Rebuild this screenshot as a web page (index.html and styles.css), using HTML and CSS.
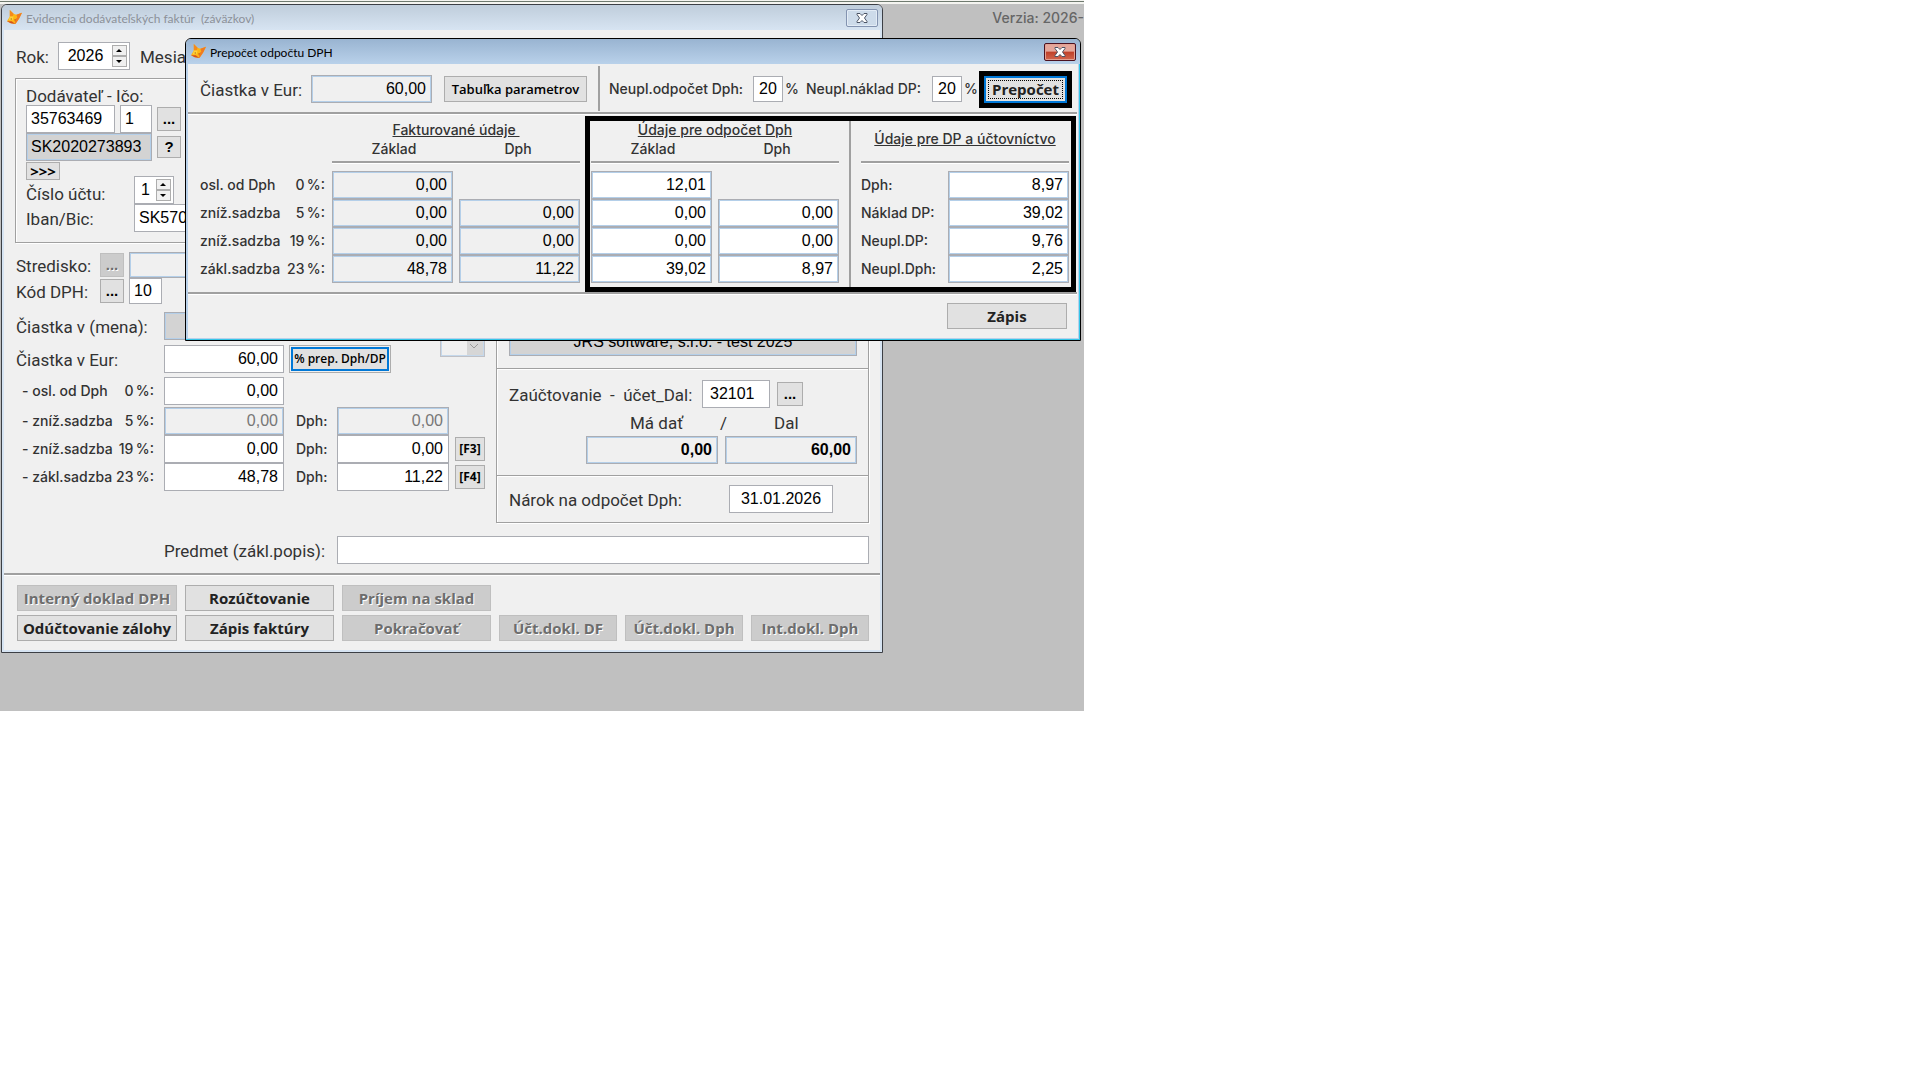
FILE: index.html
```html
<!DOCTYPE html>
<html lang="sk">
<head>
  <meta charset="UTF-8">
  <meta name="viewport" content="width=device-width, initial-scale=1.0">
  <title>Evidencia dodávateľských faktúr</title>
  <link rel="stylesheet" href="styles.css">
</head>
<body>
  <svg width="0" height="0" class="defs">
    <symbol id="fox" viewBox="0 0 16 16">
      <path d="M3 0 L7 4 L10 5 L16 3 L13 9 L9 15 L4 14 L0 12 L3 7 Z" fill="#fdb515"/>
      <path d="M3 0 L7 4 L6 7 L3 7 Z" fill="#f58a1c"/>
      <path d="M10 5 L16 3 L13 9 L9 15 L8 11 L11 8 Z" fill="#f07a22"/>
      <path d="M3 7 L7 7 L6 11 L2 11 Z" fill="#ffd23a"/>
      <path d="M0 12 L5 12 L9 15 L4 14 Z" fill="#d4501c"/>
      <path d="M4 9h1v1h-1z M8 10h1v1h-1z" fill="#7a3b10"/>
    </symbol>
    <symbol id="cross" viewBox="0 0 12 10">
      <path d="M1 .5h3l2 2 2-2h3v1L8.500 5l2.500 3.500v1H8l-2-2-2 2H1v-1L3.500 5 1 1.500z" fill="#fff" stroke="#4c5566" stroke-width="1"/>
    </symbol>
  </svg>

  <main class="desktop">
    <p class="version">Verzia: 2026-</p>

    <form class="window main-window">
      <header class="titlebar">
        <svg class="fox"><use href="#fox"/></svg>
        <h1>Evidencia dodávateľských faktúr&nbsp; (záväzkov)</h1>
        <button type="button" class="close" aria-label="Zavrieť"><svg><use href="#cross"/></svg></button>
      </header>

      <div class="columns">
        <div class="left">
          <div class="row">
            <label class="lbl w-year" for="rok">Rok:</label>
            <span class="spinner year">
              <input id="rok" type="text" value="2026">
              <span class="arrows"><button type="button" aria-label="Viac"></button><button type="button" class="down" aria-label="Menej"></button></span>
            </span>
            <span class="lbl month">Mesiac:</span>
          </div>

          <div class="supplier">
            <label class="lbl head" for="ico">Dodávateľ - Ičo:</label>
            <div class="row gap">
              <input class="field ico" id="ico" type="text" value="35763469">
              <input class="field short" type="text" value="1" aria-label="Poradie">
              <button type="button" class="btn dots">...</button>
            </div>
            <div class="row gap">
              <input class="field locked dark dic" type="text" value="SK2020273893" readonly aria-label="IČ DPH">
              <button type="button" class="btn quest">?</button>
            </div>
            <button type="button" class="btn more">&gt;&gt;&gt;</button>
            <div class="row account">
              <label class="lbl w-acc" for="ucet">Číslo účtu:</label>
              <span class="spinner">
                <input id="ucet" type="text" value="1">
                <span class="arrows"><button type="button" aria-label="Viac"></button><button type="button" class="down" aria-label="Menej"></button></span>
              </span>
            </div>
            <div class="row">
              <label class="lbl w-acc" for="iban">Iban/Bic:</label>
              <input class="field iban" id="iban" type="text" value="SK5702000000">
            </div>
          </div>

          <div class="row centre">
            <label class="lbl w-code" for="stredisko">Stredisko:</label>
            <button type="button" class="btn dots" disabled>...</button>
            <input class="field locked centre-in" id="stredisko" type="text" readonly>
          </div>
          <div class="row code">
            <label class="lbl w-code" for="kod">Kód DPH:</label>
            <button type="button" class="btn dots">...</button>
            <input class="field code-in" id="kod" type="text" value="10">
          </div>
          <div class="row currency">
            <label class="lbl w-sum" for="mena">Čiastka v (mena):</label>
            <input class="field locked dark sum" id="mena" type="text" readonly>
          </div>
          <div class="row eur">
            <label class="lbl w-sum" for="eur">Čiastka v Eur:</label>
            <input class="field sum" id="eur" type="text" value="60,00">
            <button type="button" class="btn recalc">% prep. Dph/DP</button>
            <span class="combo">
              <select disabled aria-label="Mena"><option></option></select>
              <svg viewBox="0 0 10 6"><path d="M1 1l4 4 4-4" fill="none" stroke="#9a9a9a"/></svg>
            </span>
          </div>

          <div class="row rate first">
            <label class="small" for="z0"><span>- osl. od Dph</span><span>0&thinsp;%:</span></label>
            <input class="field sum" id="z0" type="text" value="0,00">
          </div>
          <div class="row rate">
            <label class="small" for="z5"><span>- zníž.sadzba</span><span>5&thinsp;%:</span></label>
            <input class="field locked faded sum" id="z5" type="text" value="0,00" readonly>
            <label class="small tax" for="d5">Dph:</label>
            <input class="field locked faded sum vat" id="d5" type="text" value="0,00" readonly>
          </div>
          <div class="row rate">
            <label class="small" for="z19"><span>- zníž.sadzba</span><span>19&thinsp;%:</span></label>
            <input class="field sum" id="z19" type="text" value="0,00">
            <label class="small tax" for="d19">Dph:</label>
            <input class="field sum vat" id="d19" type="text" value="0,00">
            <button type="button" class="btn fkey">[F3]</button>
          </div>
          <div class="row rate">
            <label class="small" for="z23"><span>- zákl.sadzba</span><span>23&thinsp;%:</span></label>
            <input class="field sum" id="z23" type="text" value="48,78">
            <label class="small tax" for="d23">Dph:</label>
            <input class="field sum vat" id="d23" type="text" value="11,22">
            <button type="button" class="btn fkey">[F4]</button>
          </div>
        </div>

        <div class="panel">
          <div class="company">
            <input class="field locked dark" type="text" value="JRS software, s.r.o. - test 2025" readonly aria-label="Firma">
          </div>
          <div class="posting">
            <div class="row">
              <label class="lbl w-post" for="dal">Zaúčtovanie&nbsp; -&nbsp; účet_Dal:</label>
              <input class="field acct" id="dal" type="text" value="32101">
              <button type="button" class="btn dots wide">...</button>
            </div>
            <div class="balance">
              <label class="lbl" for="mada">Má dať</label>
              <span class="lbl">/</span>
              <label class="lbl" for="dalsum">Dal</label>
            </div>
            <div class="row totals">
              <input class="field locked sum" id="mada" type="text" value="0,00" readonly>
              <input class="field locked sum" id="dalsum" type="text" value="60,00" readonly>
            </div>
          </div>
          <div class="claim row">
            <label class="lbl" for="narok">Nárok na odpočet Dph:</label>
            <input class="field date" id="narok" type="text" value="31.01.2026">
          </div>
        </div>
      </div>

      <div class="row subject">
        <label class="lbl" for="predmet">Predmet (zákl.popis):</label>
        <input class="field" id="predmet" type="text">
      </div>

      <footer class="actions">
        <button type="button" class="btn" disabled>Interný doklad DPH</button>
        <button type="button" class="btn">Rozúčtovanie</button>
        <button type="button" class="btn" disabled>Príjem na sklad</button>
        <button type="button" class="btn new-line">Odúčtovanie zálohy</button>
        <button type="button" class="btn">Zápis faktúry</button>
        <button type="button" class="btn" disabled>Pokračovať</button>
        <button type="button" class="btn" disabled>Účt.dokl. DF</button>
        <button type="button" class="btn" disabled>Účt.dokl. Dph</button>
        <button type="button" class="btn" disabled>Int.dokl. Dph</button>
      </footer>
    </form>

    <form class="window dialog">
      <header class="titlebar">
        <svg class="fox"><use href="#fox"/></svg>
        <h2>Prepočet odpočtu DPH</h2>
        <button type="button" class="close" aria-label="Zavrieť"><svg><use href="#cross"/></svg></button>
      </header>

      <div class="params">
        <label class="lbl w-eur" for="p-eur">Čiastka v Eur:</label>
        <input class="field locked sum" id="p-eur" type="text" value="60,00" readonly>
        <button type="button" class="btn table-btn">Tabuľka parametrov</button>
        <div class="percents">
          <label class="small" for="p-odp">Neupl.odpočet Dph:</label>
          <input class="field pct" id="p-odp" type="text" value="20">
          <span class="small unit">%</span>
          <label class="small" for="p-nak">Neupl.náklad DP:</label>
          <input class="field pct" id="p-nak" type="text" value="20">
          <span class="small unit">%</span>
        </div>
        <div class="mark"><button type="button" class="btn default">Prepočet</button></div>
      </div>

      <div class="tables">
        <div class="rates">
          <label class="small" for="f0"><span>osl. od Dph</span><span>0&thinsp;%:</span></label>
          <label class="small" for="f5"><span>zníž.sadzba</span><span>5&thinsp;%:</span></label>
          <label class="small" for="f19"><span>zníž.sadzba</span><span>19&thinsp;%:</span></label>
          <label class="small" for="f23"><span>zákl.sadzba</span><span>23&thinsp;%:</span></label>
        </div>

        <div class="group">
          <div class="group-head">
            <h3>Fakturované údaje&nbsp;</h3>
            <div class="pair small"><span>Základ</span><span>Dph</span></div>
          </div>
          <div class="cells">
            <input class="field locked sum" id="f0" type="text" value="0,00" readonly>
            <span></span>
            <input class="field locked sum" id="f5" type="text" value="0,00" readonly>
            <input class="field locked sum" type="text" value="0,00" readonly aria-label="Dph 5 %">
            <input class="field locked sum" id="f19" type="text" value="0,00" readonly>
            <input class="field locked sum" type="text" value="0,00" readonly aria-label="Dph 19 %">
            <input class="field locked sum" id="f23" type="text" value="48,78" readonly>
            <input class="field locked sum" type="text" value="11,22" readonly aria-label="Dph 23 %">
          </div>
        </div>

        <div class="mark marked">
          <div class="group">
            <div class="group-head">
              <h3>Údaje pre odpočet Dph</h3>
              <div class="pair small"><span>Základ</span><span>Dph</span></div>
            </div>
            <div class="cells">
              <input class="field result sum" type="text" value="12,01" aria-label="Základ 0 %">
              <span></span>
              <input class="field result sum" type="text" value="0,00" aria-label="Základ 5 %">
              <input class="field result sum" type="text" value="0,00" aria-label="Odpočet 5 %">
              <input class="field result sum" type="text" value="0,00" aria-label="Základ 19 %">
              <input class="field result sum" type="text" value="0,00" aria-label="Odpočet 19 %">
              <input class="field result sum" type="text" value="39,02" aria-label="Základ 23 %">
              <input class="field result sum" type="text" value="8,97" aria-label="Odpočet 23 %">
            </div>
          </div>
          <div class="group ledger">
            <div class="group-head">
              <h3>Údaje pre DP a účtovníctvo</h3>
            </div>
            <div class="cells">
              <label class="small" for="u-dph">Dph:</label>
              <input class="field result sum" id="u-dph" type="text" value="8,97">
              <label class="small" for="u-nak">Náklad DP:</label>
              <input class="field result sum" id="u-nak" type="text" value="39,02">
              <label class="small" for="u-ndp">Neupl.DP:</label>
              <input class="field result sum" id="u-ndp" type="text" value="9,76">
              <label class="small" for="u-ndph">Neupl.Dph:</label>
              <input class="field result sum" id="u-ndph" type="text" value="2,25">
            </div>
          </div>
        </div>
      </div>

      <footer class="save"><button type="button" class="btn">Zápis</button></footer>
    </form>
  </main>
</body>
</html>
```
FILE: styles.css
```css
* {
  margin: 0;
  padding: 0;
  box-sizing: border-box;
}

body {
  font-family: Roboto, "Liberation Sans", sans-serif;
  font-size: 16px;
  color: #333;
  background: #fff;
}

.defs {
  position: absolute;
}

.desktop {
  position: relative;
  max-width: 1084px;
  padding: 2px 0 58px 1px;
  background: #c0c0c0;
  border-top: 1px solid #f4f4f0;
  box-shadow: inset 0 1px #6f7a6f, inset 0 3px #f4f4f0;
  overflow: hidden;
}

.version {
  position: absolute;
  top: 7px;
  right: 0;
  white-space: nowrap;
  font: 500 14px/20px Inter, sans-serif;
  color: #666;
}

/* windows */
.window {
  background: #f0f0f0;
  border: 1px solid #3c3f45;
  border-radius: 6px 6px 0 0;
}

.main-window {
  position: relative;
  max-width: 882px;
  margin-top: 1px;
  box-shadow: inset 0 0 0 2px #d7e4f2;
}

.dialog {
  position: absolute;
  top: 37px;
  left: 185px;
  width: 896px;
  border-color: #000;
  box-shadow: inset -1px -1px #35c6e8, inset 0 0 0 2px #b9d1ea;
}

.titlebar {
  display: flex;
  align-items: center;
  height: 25px;
  padding: 0 4px 0 5px;
  border-radius: 5px 5px 0 0;
  background: linear-gradient(#bfcddb, #d7e4f2);
}

.dialog .titlebar {
  background: linear-gradient(#99b4d1, #b9d1ea);
}

.titlebar h1,
.titlebar h2 {
  flex: 1;
  margin-left: 4px;
  padding-top: 2px;
  font: 12px/16px Lato, sans-serif;
  color: #8c9199;
}

.titlebar h2 {
  color: #000;
}

.fox {
  width: 15px;
  height: 15px;
}

.close {
  display: flex;
  align-items: center;
  justify-content: center;
  width: 32px;
  height: 18px;
  border: 1px solid #8393b0;
  border-radius: 2px;
  background: #cddbea;
  box-shadow: inset 0 0 0 1px #e3ecf6;
}

.close svg {
  width: 12px;
  height: 10px;
}

.dialog .close {
  border-color: #4b1220;
  background: linear-gradient(#e5a79b 0 45%, #bf4029 50%, #d2664f);
  box-shadow: inset 0 0 0 1px #e2a193;
}

/* shared controls */
.row {
  display: flex;
  align-items: center;
}

.lbl {
  padding-top: 2px;
  font-size: 17px;
  line-height: 20px;
  white-space: nowrap;
}

.small {
  font: 500 14px/18px Inter, sans-serif;
  white-space: nowrap;
}

.field,
.spinner input {
  font: 16px/20px "Liberation Sans", Arial, sans-serif;
  color: #000;
  background: #fff;
}

.field {
  height: 28px;
  min-width: 0;
  padding: 0 4px;
  border: 1px solid #abadb3;
  outline: none;
}

.locked,
.result {
  box-shadow: inset 0 0 0 1px #b4cfe9;
}

.locked {
  background: #f0f0f0;
}

.dark {
  background: #d3d3d3;
}

.faded {
  color: #777;
}

.sum {
  width: 120px;
  padding-right: 5px;
  text-align: right;
}

.btn {
  height: 26px;
  font: 700 15px/20px "Open Sans", sans-serif;
  color: #222;
  background: #e1e1e1;
  border: 1px solid #adadad;
  white-space: nowrap;
}

.btn:disabled {
  color: #6d6d6d;
  background: #ccc;
  border-color: #bfbfbf;
  text-shadow: 1px 1px #fff;
}

.dots,
.quest {
  width: 24px;
  height: 24px;
  font: bold 15px/16px "Liberation Sans", sans-serif;
  color: #000;
}

.quest {
  height: 22px;
}

.wide {
  width: 26px;
  margin-left: 7px;
}

.spinner {
  display: flex;
  align-items: center;
  width: 40px;
  height: 28px;
  padding: 0 2px;
  border: 1px solid #abadb3;
  background: #fff;
}

.spinner input {
  flex: 1;
  width: 0;
  padding-right: 2px;
  text-align: center;
  border: 0;
}

.year {
  width: 72px;
}

.arrows {
  display: flex;
  flex-direction: column;
}

.arrows button {
  width: 15px;
  height: 11px;
  padding: 3px;
  border: 1px solid #adadad;
  background: #f0f0f0;
}

.arrows button::before {
  content: "";
  display: block;
  border: solid transparent;
  border-width: 0 3px 3px;
  border-bottom-color: #000;
  width: 0;
}

.arrows .down::before {
  border-width: 3px 3px 0;
  border-top-color: #000;
}

/* invoice form */
.columns {
  display: grid;
  grid-template-columns: 469px 1fr;
  gap: 11px;
  padding: 12px 13px 0 14px;
}

.left {
  padding-bottom: 32px;
}

.w-year {
  width: 42px;
}

.month {
  margin-left: 10px;
}

.supplier {
  margin: 8px 0 9px -1px;
  padding: 5px 10px 10px;
  border: 1px solid #a0a0a0;
  box-shadow: 1px 1px #fff, inset 1px 1px #fff;
}

.head {
  display: block;
  height: 21px;
}

.gap {
  gap: 5px;
}

.ico {
  width: 89px;
}

.short {
  width: 32px;
}

.dic {
  width: 126px;
}

.more {
  display: block;
  width: 34px;
  height: 18px;
  margin-top: 1px;
  font: bold 15px/14px "Open Sans", sans-serif;
  color: #000;
}

.account {
  align-items: flex-end;
  margin-top: -4px;
}

.w-acc {
  width: 108px;
}

.iban {
  width: 200px;
}

.w-code {
  width: 84px;
}

.centre .field,
.code .field {
  height: 26px;
  margin-left: 5px;
}

.centre-in {
  width: 200px;
}

.code-in {
  width: 33px;
}

.currency {
  margin-top: 8px;
}

.w-sum {
  width: 148px;
}

.eur {
  margin-top: 5px;
}

.recalc {
  width: 102px;
  height: 28px;
  margin-left: 5px;
  font-size: 12px;
  font-weight: 600;
  color: #000;
  box-shadow: inset 0 0 0 1px #f0f0f0, inset 0 0 0 3px #0078d7;
}

.combo {
  position: relative;
  align-self: flex-start;
  margin: -16px 0 0 auto;
}

.combo select {
  appearance: none;
  display: block;
  width: 45px;
  height: 28px;
  border: 1px solid #abadb3;
  background: linear-gradient(90deg, #f0f0f0 26px, #ccc 26px);
  box-shadow: inset 0 0 0 1px #b4cfe9;
}

.combo svg {
  position: absolute;
  right: 6px;
  bottom: 8px;
  width: 10px;
  height: 6px;
}

.rate > .small:first-child {
  display: flex;
  justify-content: space-between;
  width: 148px;
  padding: 0 10px 0 6px;
}

.first {
  margin: 4px 0 2px;
}

.rate .tax {
  width: 53px;
  padding-left: 12px;
}

.rate .vat {
  width: 112px;
}

.fkey {
  width: 30px;
  height: 24px;
  margin-left: 6px;
  font: bold 12px/16px "Open Sans", sans-serif;
  color: #000;
}

.panel {
  display: flex;
  flex-direction: column;
  margin-top: 36px;
  border: 1px solid #a0a0a0;
  box-shadow: 1px 1px #fff, inset 1px 1px #fff;
}

.company {
  flex: 1;
  display: flex;
  align-items: flex-end;
  padding: 12px 11px 12px 12px;
}

.company .field {
  flex: 1;
  text-align: center;
}

.posting {
  padding: 11px 11px 11px 12px;
  border: solid #a0a0a0;
  border-width: 1px 0;
  box-shadow: inset 0 1px #fff, 0 1px #fff;
}

.w-post {
  width: 193px;
}

.acct {
  width: 68px;
  padding-left: 7px;
}

.balance {
  display: grid;
  grid-template-columns: 90px 54px 83px;
  justify-content: end;
  padding: 3px 0;
}

.totals {
  justify-content: flex-end;
  gap: 7px;
}

.totals .field {
  width: 132px;
  font-weight: bold;
}

.claim {
  justify-content: space-between;
  padding: 9px 35px 9px 12px;
}

.date {
  width: 104px;
  text-align: center;
}

.subject {
  gap: 12px;
  padding: 13px 13px 9px 162px;
}

.subject .lbl {
  width: 161px;
}

.subject .field {
  flex: 1;
}

.actions {
  display: grid;
  grid-template-columns: 160px 149px 149px 118px 118px 118px;
  gap: 4px 8px;
  margin: 0 2px;
  padding: 10px 13px 11px;
  border-top: 2px solid #a0a0a0;
  box-shadow: inset 0 1px #fff;
}

.new-line {
  grid-column: 1;
}

/* recalculation dialog */
.params {
  display: flex;
  align-items: center;
  height: 50px;
  margin: 0 3px 0 2px;
  padding: 2px 0 0 12px;
  border-bottom: 2px solid #a0a0a0;
}

.w-eur {
  width: 111px;
}

.params .sum {
  width: 121px;
}

.table-btn {
  width: 143px;
  margin: 0 11px 0 12px;
  font-size: 13px;
  font-weight: 600;
  color: #000;
}

.percents {
  display: flex;
  align-items: center;
  align-self: stretch;
  margin-bottom: 1px;
  padding-left: 9px;
  border-left: 2px solid #a0a0a0;
}

.percents label {
  width: 144px;
}

.percents .unit + label {
  width: 126px;
}

.pct {
  width: 30px;
  height: 26px;
  text-align: center;
}

.unit {
  width: 23px;
  padding-left: 2px;
}

.mark {
  border: 5px solid #000;
}

.params .mark {
  margin-left: -6px;
}

.default {
  display: block;
  width: 83px;
  height: 27px;
  border: 2px solid #0078d7;
  outline: 1px dotted #000;
  outline-offset: -5px;
}

.tables {
  display: flex;
  margin: 0 3px 0 2px;
  padding: 2px 0 0 12px;
  border-bottom: 2px solid #a0a0a0;
  box-shadow: 0 1px #fff, inset 0 1px #fff;
}

.rates {
  flex: none;
  width: 132px;
  padding: 55px 7px 0 0;
}

.rates .small {
  display: flex;
  align-items: center;
  justify-content: space-between;
  height: 28px;
}

.group {
  flex: none;
  width: 248px;
  padding-top: 5px;
}

.group-head {
  height: 42px;
  border-bottom: 2px solid #a0a0a0;
  box-shadow: 0 1px #fff;
  text-align: center;
}

.group h3 {
  font: 500 14px/18px Inter, sans-serif;
  text-decoration: underline;
  white-space: nowrap;
}

.pair {
  display: grid;
  grid-template-columns: 1fr 1fr;
  line-height: 20px;
}

.cells {
  display: grid;
  grid-template-columns: 121px 121px;
  grid-auto-rows: 28px;
  align-items: center;
  gap: 0 6px;
  padding-top: 8px;
}

.cells .sum {
  width: 121px;
}

.marked {
  display: flex;
  flex: 1;
  min-width: 0;
  height: 176px;
  margin: 0 1px 0 5px;
  padding-left: 1px;
}

.marked .group {
  padding-top: 0;
}

.marked .ledger {
  flex: 1;
  min-width: 0;
  margin-left: 10px;
  padding: 0 2px 0 10px;
  border-left: 2px solid #a0a0a0;
}

.ledger h3 {
  padding-top: 9px;
}

.ledger .cells {
  grid-template-columns: 1fr 121px;
  column-gap: 0;
}

.save {
  display: flex;
  justify-content: flex-end;
  padding: 9px 13px 11px;
}

.save .btn {
  width: 120px;
}
```
